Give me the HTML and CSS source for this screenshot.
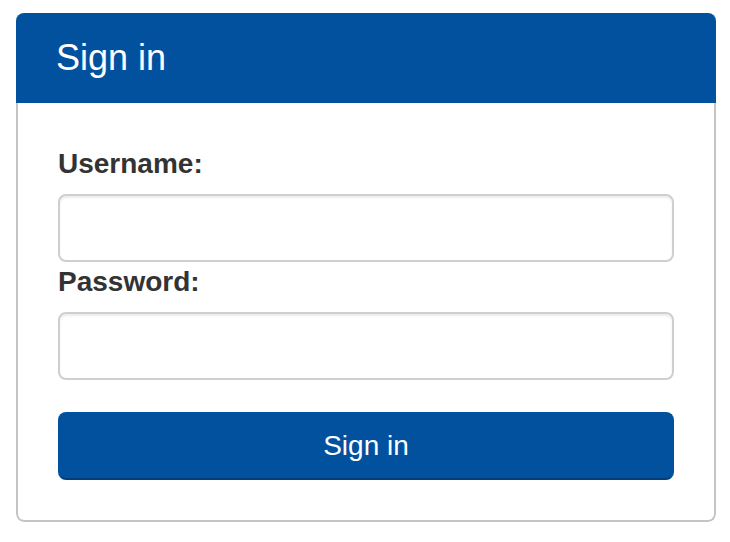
FILE: index.html
```html
<!DOCTYPE html>
<html>
<head>
<meta charset="utf-8">
<link rel="stylesheet" href="styles.css">
</head>
<body>
<div class="panel">
  <div class="panel-heading">Sign in</div>
  <form class="panel-body">
    <label class="label" for="u">Username:</label>
    <input class="input" id="u" type="text">
    <label class="label" for="p">Password:</label>
    <input class="input" id="p" type="password">
    <button class="btn" type="button">Sign in</button>
  </form>
</div>
</body>
</html>
```
FILE: styles.css
```css
html, body {
  margin: 0;
  padding: 0;
  background: #fff;
}
body {
  padding: 13px 0 0 16px;
  font-family: "Liberation Sans", Arial, sans-serif;
}
.panel {
  width: 700px;
  box-sizing: border-box;
  border-radius: 8px;
  overflow: hidden;
  background: #fff;
}
.panel-heading {
  background: #02519e;
  color: #fff;
  font-size: 36px;
  line-height: 40px;
  padding: 25px 40px;
}
.panel-body {
  display: flex;
  flex-direction: column;
  padding: 41px 40px 40px;
  border: 2px solid #c4c4c4;
  border-top: 0;
  border-radius: 0 0 8px 8px;
  margin: 0;
}
.label {
  display: block;
  font-size: 28px;
  line-height: 40px;
  font-weight: bold;
  color: #333;
  margin-bottom: 10px;
}
.input {
  display: block;
  box-sizing: border-box;
  height: 68px;
  width: 100%;
  margin: 0;
  border: 2px solid #cfcfcf;
  border-radius: 8px;
  box-shadow: inset 0 2px 2px rgba(0,0,0,0.075);
  background: #fff;
  font-size: 28px;
  padding: 12px 24px;
}
.btn {
  display: block;
  box-sizing: border-box;
  width: 100%;
  height: 68px;
  margin-top: 32px;
  background: #02519e;
  border: 2px solid #02519e;
  border-bottom-color: #013f7c;
  border-radius: 8px;
  color: #fff;
  font-family: "Liberation Sans", Arial, sans-serif;
  font-size: 28px;
  line-height: 40px;
  padding: 12px 24px;
}
```
